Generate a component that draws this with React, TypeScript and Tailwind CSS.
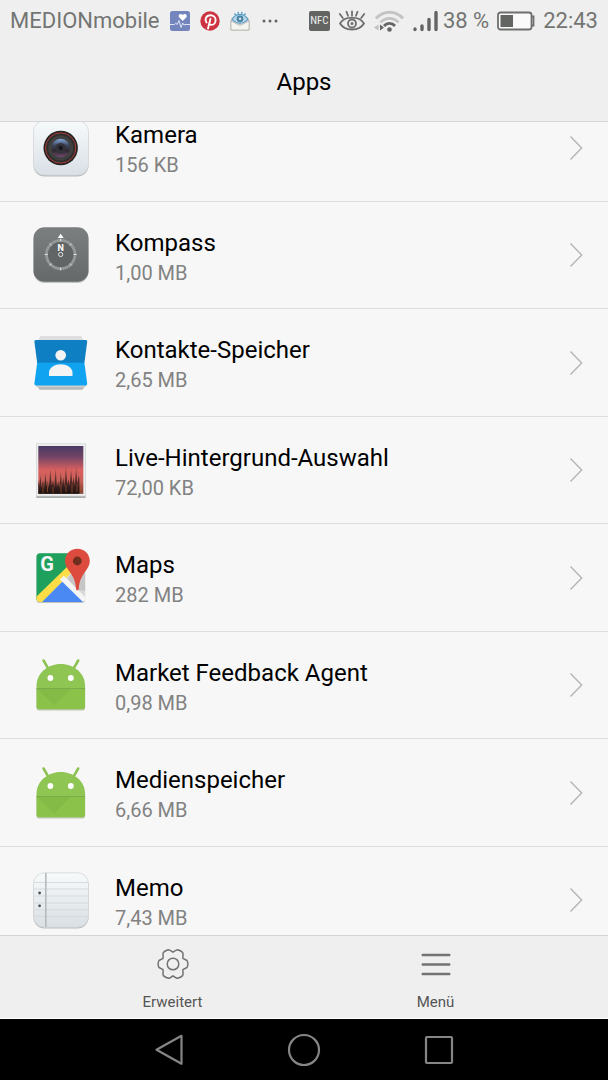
import type { ReactNode } from 'react';

function CameraIcon() {
  return (
    <svg viewBox="0 0 60 60" className="size-full" aria-hidden="true">
      <defs>
        <linearGradient id="camCase" x1="0" y1="0" x2="0" y2="1">
          <stop offset="0" stopColor="#f7fafb" />
          <stop offset="1" stopColor="#d9e0e6" />
        </linearGradient>
        <linearGradient id="camGlass" x1="0" y1="0" x2="0" y2="1">
          <stop offset="0" stopColor="#86a8e0" />
          <stop offset="0.35" stopColor="#3c475f" />
          <stop offset="0.65" stopColor="#2d2831" />
          <stop offset="1" stopColor="#74496e" />
        </linearGradient>
      </defs>
      <rect x="2.5" y="4" width="55" height="54.5" rx="11" fill="#b9bcbe" />
      <rect x="2.5" y="2.5" width="55" height="54.5" rx="11" fill="url(#camCase)" stroke="#d5d8da" strokeWidth="0.8" />
      <circle cx="29.7" cy="30" r="17.2" fill="#232222" />
      <circle cx="29.7" cy="30" r="15.2" fill="#302f2f" stroke="#b03d36" strokeWidth="1" />
      <circle cx="29.7" cy="30" r="12.5" fill="#414041" />
      <circle cx="29.7" cy="30" r="9.2" fill="url(#camGlass)" />
      <circle cx="29.7" cy="30.3" r="5.4" fill="#33323a" />
      <circle cx="29.7" cy="30" r="2.2" fill="#17171b" />
    </svg>
  );
}

function CompassIcon() {
  return (
    <svg viewBox="0 0 60 60" className="size-full" aria-hidden="true">
      <defs>
        <linearGradient id="compassCase" x1="0" y1="0" x2="0" y2="1">
          <stop offset="0" stopColor="#7b7f7f" />
          <stop offset="1" stopColor="#666969" />
        </linearGradient>
      </defs>
      <rect x="2.5" y="3.5" width="55" height="54.5" rx="11" fill="#c2c3c3" />
      <rect x="2.5" y="2.3" width="55" height="54.5" rx="11" fill="url(#compassCase)" />
      <circle cx="29.700" cy="29.500" r="14.200" fill="#616565" stroke="#8f9393" strokeWidth="2.800" />
      <circle cx="29.700" cy="29.500" r="14.200" fill="none" stroke="#b9bcbc" strokeWidth="2.800" strokeDasharray="0.500 1.400" opacity="0.500" />
      <path d="M29.700 13.500v3M29.700 42.500v3M13.700 29.500h3M42.700 29.500h3M18.700 18.500l2 2M38.700 38.500l2 2M40.700 18.500l-2 2M20.700 38.500l-2 2" stroke="#e0e2e2" strokeWidth="1" />
      <path d="M29.700 8.800l3 4.200h-6z" fill="#fff" />
      <text x="29.700" y="26" textAnchor="middle" fontSize="9" fontWeight="700" fill="#fff" fontFamily="Roboto, sans-serif">N</text>
      <circle cx="29.700" cy="29.500" r="2.100" fill="none" stroke="#e5e7e7" strokeWidth="1" />
    </svg>
  );
}

function ContactsIcon() {
  return (
    <svg viewBox="0 0 60 60" className="size-full" aria-hidden="true">
      <path d="M9.500 3h40.500l3 5H6.500z" fill="#dedede" />
      <path d="M5 51h50l-3.500 5.800h-43z" fill="#b4b7b8" />
      <path d="M5 50h50v3q0 1.300-1.500 1.300h-47Q5 54.300 5 53z" fill="#cdd0d1" />
      <path d="M4.800 7h50q1.600 0 1.400 1.800L53.400 30H6.200L3.400 8.800Q3.200 7 4.800 7z" fill="#0f7fc4" />
      <path d="M6.200 29.700h47.200L56.200 50.500q.2 1.900-1.600 1.900H5q-1.800 0-1.600-1.900z" fill="#10a3f0" />
      <circle cx="29.700" cy="22.300" r="5.300" fill="#f4f4f4" />
      <path d="M18 43v-3.500c0-4.800 6-8.200 11.700-8.200s11.800 3.400 11.800 8.200V43z" fill="#f4f4f4" />
    </svg>
  );
}

function WallpaperIcon() {
  return (
    <svg viewBox="0 0 60 60" className="size-full" aria-hidden="true">
      <defs>
        <linearGradient id="dusk" x1="0" y1="0" x2="0" y2="1">
          <stop offset="0" stopColor="#4b3a62" />
          <stop offset="0.22" stopColor="#704466" />
          <stop offset="0.5" stopColor="#d8605f" />
          <stop offset="0.72" stopColor="#c96057" />
          <stop offset="1" stopColor="#7a3d2c" />
        </linearGradient>
        <linearGradient id="reeds" x1="0" y1="0" x2="0" y2="1">
          <stop offset="0" stopColor="#8a3d40" stopOpacity="0.500" />
          <stop offset="0.500" stopColor="#4a2626" stopOpacity="0.850" />
          <stop offset="1" stopColor="#19110f" />
        </linearGradient>
      </defs>
      <rect x="5.300" y="4.500" width="49.300" height="53.500" fill="#a9adad" />
      <rect x="5.300" y="3.500" width="49.300" height="52.500" fill="#eceeee" stroke="#d5d8d8" strokeWidth="0.600" />
      <rect x="7.300" y="6" width="45" height="47.800" fill="url(#dusk)" />
      <path
        d="M7.300 53.800V40l1 6 1.200-11 1 13 1.500-8 1 8 1.600-15 1 13 1.200-5 1 7 1.700-19 1.200 17 1.300-6 1.200 8 1.500-20 1.200 19 1.300-6 1 7 1.700-16 1 14 1.500-9 1 10 1.500-22 1.400 20 1.300-6 1 7 1.500-17 1.300 15 1.300-7 1 9 1.500-20 1.200 18 1.200-9 .8 4V53.800z"
        fill="url(#reeds)"
      />
      <path d="M12 53v-8M16.500 52v-9M22 53v-6M30 53v-9M35 52v-7M41 53v-9M46 52v-8M50 53v-5" stroke="#a65c39" strokeWidth="0.900" opacity="0.700" />
    </svg>
  );
}

function MapsIcon() {
  return (
    <svg viewBox="0 0 60 60" className="size-full" aria-hidden="true">
      <defs>
        <clipPath id="mapSheet">
          <rect x="5.500" y="5.300" width="48.600" height="48.700" rx="3.500" />
        </clipPath>
      </defs>
      <rect x="5.500" y="6.300" width="48.600" height="48.700" rx="3.500" fill="#bfc0c0" />
      <g clipPath="url(#mapSheet)">
        <rect x="5" y="5" width="50" height="50" fill="#dadada" />
        <path d="M5 5h40v12L5 53z" fill="#1fa15d" />
        <path d="M30 31l26 25H5z" fill="#4a89f3" />
        <path d="M5 49L37 18l6 4L9 56H5z" fill="#fedd46" />
        <path d="M46.500 42L37 31l6-11 13-2v25z" fill="#b9b9b9" opacity="0.600" />
        <path d="M29 31.500l3.800-3.800L56 51v5h-2z" fill="#f5f5f5" />
      </g>
      <text x="16" y="23.300" textAnchor="middle" fontSize="20" fontWeight="700" fill="#f7f7f7" fontFamily="Roboto, sans-serif">G</text>
      <path d="M46.400.8c-7 0-12.400 5.400-12.400 12.200 0 4 2 7 4.500 10.500 4 5.700 6 9.500 6.500 17.200.2 2 2.600 2 2.800 0 .5-7.700 2.500-11.500 6.500-17.200 2.500-3.500 4.500-6.500 4.500-10.500C58.800 6.200 53.400.8 46.400.8z" fill="#dc4b3e" />
      <circle cx="46.300" cy="13" r="4.400" fill="#702e1c" />
    </svg>
  );
}

function AndroidIcon() {
  return (
    <svg viewBox="0 0 60 60" className="size-full" aria-hidden="true">
      <path d="M5.500 33.500h48.600v19.200q0 2.800-2.800 2.800h-43q-2.800 0-2.800-2.800z" fill="#bfc8b3" />
      <path d="M12.600 5.500l5.200 9.200M47.200 5.500L42 14.700" stroke="#8ec154" strokeWidth="2.600" strokeLinecap="round" />
      <path d="M5.500 33.700V31C5.500 18.500 16.500 9 29.800 9s24.300 9.500 24.300 22v2.700z" fill="#8fc553" />
      <path d="M5.500 33.700h48.600v17.800q0 2.800-2.800 2.800h-43q-2.800 0-2.800-2.800z" fill="#8bc34a" />
      <path d="M5.500 33.700L23.500 50.500 40 33.700z" fill="#7cb342" opacity="0.500" />
      <path d="M5.500 33.500h48.600" stroke="#74a541" strokeWidth="0.800" />
      <circle cx="19.400" cy="23" r="2.900" fill="#fff" />
      <circle cx="39.800" cy="23" r="2.900" fill="#fff" />
    </svg>
  );
}

function MemoIcon() {
  return (
    <svg viewBox="0 0 60 60" className="size-full" aria-hidden="true">
      <defs>
        <linearGradient id="memoPaper" x1="0" y1="0" x2="0" y2="1">
          <stop offset="0" stopColor="#f7fafb" />
          <stop offset="1" stopColor="#d9dfe3" />
        </linearGradient>
      </defs>
      <rect x="2.500" y="4" width="55" height="54.500" rx="11" fill="#b9bbba" />
      <rect x="2.500" y="2.800" width="55" height="54.500" rx="11" fill="url(#memoPaper)" stroke="#d3d6d6" strokeWidth="0.800" />
      <path d="M3 12.500h54M3 19h54M3 26h54M3 33h54M3 39.700h54M3 46.300h54" stroke="#cfd5d9" strokeWidth="0.800" />
      <path d="M14.800 3v54" stroke="#b5babd" strokeWidth="1.600" />
      <circle cx="8.600" cy="23" r="1.400" fill="#4b4f52" />
      <circle cx="8.600" cy="35.800" r="1.400" fill="#4b4f52" />
    </svg>
  );
}

const apps: { name: string; size: string; icon: ReactNode }[] = [
  { name: 'Kamera', size: '156 KB', icon: <CameraIcon /> },
  { name: 'Kompass', size: '1,00 MB', icon: <CompassIcon /> },
  { name: 'Kontakte-Speicher', size: '2,65 MB', icon: <ContactsIcon /> },
  { name: 'Live-Hintergrund-Auswahl', size: '72,00 KB', icon: <WallpaperIcon /> },
  { name: 'Maps', size: '282 MB', icon: <MapsIcon /> },
  { name: 'Market Feedback Agent', size: '0,98 MB', icon: <AndroidIcon /> },
  { name: 'Medienspeicher', size: '6,66 MB', icon: <AndroidIcon /> },
  { name: 'Memo', size: '7,43 MB', icon: <MemoIcon /> },
];

function StatusBar() {
  return (
    <div className="flex h-[42px] items-center justify-between px-[10px] text-[22px] leading-7 text-[#737573]">
      <div className="flex items-center gap-[10px]">
        <span className="whitespace-nowrap">MEDIONmobile</span>
        <svg viewBox="0 0 20 20" className="size-5" aria-hidden="true">
          <rect width="20" height="20" rx="2.500" fill="#7485bd" />
          <path d="M12.700 10L9 6.300c-1.500-2.500 1.800-4.600 3.700-2.200 1.900-2.400 5.200-.3 3.700 2.200z" fill="#fff" />
          <path d="M0 13.500h4.500l1.300-1.200 1.400 1.200L9 9.500l2 7 1.700-4.500 1.300 2 1-.5h5" fill="none" stroke="#e9edf8" strokeWidth="0.900" />
        </svg>
        <svg viewBox="0 0 20 20" className="size-5" aria-hidden="true">
          <circle cx="10" cy="10" r="9.700" fill="#cd3341" />
          <path d="M6.500 11.500C4.200 8 6.400 4.300 10.400 4.300c3.200 0 5.200 2 5.200 4.600 0 3-1.700 5-3.900 5-1.100 0-1.800-.5-2.100-1.100M10.500 7.800L8 17.500" fill="none" stroke="#fff" strokeWidth="1.900" strokeLinecap="round" />
        </svg>
        <svg viewBox="0 0 20 20" className="size-5" aria-hidden="true">
          <path d="M1 9L10 3l9 6v10H1z" fill="#dcdcd8" stroke="#aaa9a5" strokeWidth="0.800" />
          <path d="M4.500 2.500l1.500 2M8 .8l.5 3M12 .8l-.5 3M15.500 2.500l-1.500 2" stroke="#5fa6cf" strokeWidth="1.500" />
          <path d="M2 8c4-6 12-6 16 0-4 5.500-12 5.500-16 0z" fill="#b5d6ea" stroke="#5298c0" strokeWidth="1.100" />
          <circle cx="10" cy="7.800" r="3.300" fill="#457f9f" />
          <circle cx="10" cy="7.800" r="1.400" fill="#c9e2ee" />
          <path d="M1 10l9 4.500 9-4.500v9H1z" fill="#f3f3ef" stroke="#b5b4af" strokeWidth="0.800" />
        </svg>
        <svg viewBox="0 0 20 20" className="size-5" aria-hidden="true">
          <g fill="#636563">
            <circle cx="4" cy="10" r="1.500" />
            <circle cx="10" cy="10" r="1.500" />
            <circle cx="16" cy="10" r="1.500" />
          </g>
        </svg>
      </div>
      <div className="flex items-center gap-2">
        <span className="flex h-5 w-[21px] items-center justify-center rounded-[2px] bg-[#636563] font-['Roboto_Condensed','Roboto',sans-serif] text-[11px] leading-5 text-[#efefef]">
          NFC
        </span>
        <svg viewBox="0 0 28 24" className="h-6 w-7" fill="none" stroke="#6d6f6d" strokeWidth="1.800" strokeLinecap="round" aria-hidden="true">
          <path d="M2 14.500c5-7.800 19-7.800 24 0-5 8-19 8-24 0z" />
          <circle cx="14" cy="14.500" r="4" />
          <circle cx="14" cy="14.500" r="0.700" />
          <path d="M1.800 5l3 4M8.500 2.800l1.500 4M14 6.500v-4M19.500 2.800l-1.500 4M26.200 5l-3 4" />
        </svg>
        <svg viewBox="0 0 30 24" className="h-6 w-[30px]" aria-hidden="true">
          <g fill="none" strokeLinecap="butt">
            <path d="M2 9.500c7.500-8.500 19.500-8.500 27 0" stroke="#c3c4c3" strokeWidth="3" />
            <path d="M6.500 13.500c5-5.500 13-5.500 18 0" stroke="#c3c4c3" strokeWidth="2.600" />
            <path d="M10 17c3-3.500 8-3.500 11 0" stroke="#636563" strokeWidth="2.800" />
          </g>
          <circle cx="15.500" cy="20.500" r="2.300" fill="#636563" />
          <path d="M4.500 15.500v6L0 18.500z" fill="#bfc0bf" />
          <path d="M6 15.500v6l4-3z" fill="#636563" />
        </svg>
        <div className="flex items-center gap-[5px]">
          <svg viewBox="0 0 26 22" className="h-[22px] w-[26px]" stroke="#636563" strokeWidth="3.400" strokeLinecap="round" aria-hidden="true">
            <path d="M3 19v.5M10 16v3.500M17 9.500v10M24 2.500v17" />
          </svg>
          <span className="whitespace-nowrap">38 %</span>
        </div>
        <svg viewBox="0 0 38 20" className="h-5 w-[38px]" aria-hidden="true">
          <rect x="1" y="1.500" width="33.500" height="17" rx="2.500" fill="#fafafa" stroke="#6d6f6d" strokeWidth="1.800" />
          <path d="M3.500 4h12.500v12H3.500z" fill="#636563" />
          <path d="M35 5.500h1.500v9H35" fill="none" stroke="#6d6f6d" strokeWidth="1.800" />
        </svg>
        <span>22:43</span>
      </div>
    </div>
  );
}

export default function App() {
  return (
    <div className="flex h-screen flex-col overflow-hidden bg-[#f7f7f7] font-['Roboto',sans-serif]">
      <header className="shrink-0 border-b border-[#d6d6d6] bg-[#efefef]">
        <StatusBar />
        <h1 className="flex h-[79px] items-center justify-center text-2xl text-black">Apps</h1>
      </header>

      <main className="min-h-0 flex-1 overflow-hidden">
        <ul className="-mt-7">
          {apps.map((app) => (
            <li key={app.name} className="border-b border-[#dedede] odd:h-[108px] even:h-[107px]">
              <a href="#" className="flex h-full items-center pr-[25px] pl-[31px]">
                <span className="size-[60px] shrink-0">{app.icon}</span>
                <span className="ml-6 flex min-w-0 flex-1 flex-col gap-[3px] pt-[6px]">
                  <span className="truncate text-2xl leading-[26px] text-black">{app.name}</span>
                  <span className="text-xl leading-7 text-[#828282]">{app.size}</span>
                </span>
                <svg viewBox="0 0 14 26" className="h-[26px] w-[14px]" fill="none" stroke="#b5b5b5" strokeWidth="1.400" aria-hidden="true">
                  <path d="M1.500 1.500L12.700 13 1.500 24.500" />
                </svg>
              </a>
            </li>
          ))}
        </ul>
      </main>

      <footer className="shrink-0">
        <div className="grid grid-cols-2 border-t border-b border-t-[#d4d4d4] border-b-white bg-[#efefef] px-[41px] text-[15px] text-[#555]">
          <button type="button" className="flex h-[82px] flex-col items-center gap-3 pt-3">
            <svg viewBox="0 0 32 32" className="size-8" fill="none" stroke="#737373" strokeWidth="1.500" strokeLinejoin="round" aria-hidden="true">
              <path d="M11.500 1.700 Q12.500 1.700 16 4.200 Q19.500 1.700 20.500 1.700 Q25.500 3 26 5.500 L25.900 10.300 L30 12.500 Q31.800 16 30 19.500 L25.900 21.700 L26 26.500 Q25.500 29 20.500 30.300 Q19.500 30.300 16 27.800 Q12.500 30.300 11.500 30.300 Q6.500 29 6 26.500 L6.100 21.700 L2 19.500 Q.2 16 2 12.500 L6.100 10.300 L6 5.500 Q6.500 3 11.500 1.700z" />
              <circle cx="16" cy="16" r="5.800" />
            </svg>
            <span className="leading-5">Erweitert</span>
          </button>
          <button type="button" className="flex h-[82px] flex-col items-center gap-3 pt-3">
            <svg viewBox="0 0 32 32" className="size-8" stroke="#737373" strokeWidth="2.400" strokeLinecap="round" aria-hidden="true">
              <path d="M2.700 7h26.600M2.700 16.500h26.600M2.700 26h26.600" />
            </svg>
            <span className="leading-5">Menü</span>
          </button>
        </div>
        <nav className="grid h-[61px] grid-cols-3 bg-black px-[101px]">
          <button type="button" aria-label="Zurück" className="flex items-center justify-center">
            <svg viewBox="0 0 34 34" className="size-[34px]" fill="none" stroke="#858585" strokeWidth="2.200" strokeLinejoin="round" aria-hidden="true">
              <path d="M4.500 16.700L29.500 2.800V30.800z" />
            </svg>
          </button>
          <button type="button" aria-label="Startseite" className="flex items-center justify-center">
            <svg viewBox="0 0 34 34" className="size-[34px]" fill="none" stroke="#858585" strokeWidth="2.200" aria-hidden="true">
              <circle cx="17" cy="17" r="15" />
            </svg>
          </button>
          <button type="button" aria-label="Übersicht" className="flex items-center justify-center">
            <svg viewBox="0 0 34 34" className="size-[34px]" fill="none" stroke="#858585" strokeWidth="2.200" aria-hidden="true">
              <rect x="4" y="4" width="26" height="26" rx="1" />
            </svg>
          </button>
        </nav>
      </footer>
    </div>
  );
}
